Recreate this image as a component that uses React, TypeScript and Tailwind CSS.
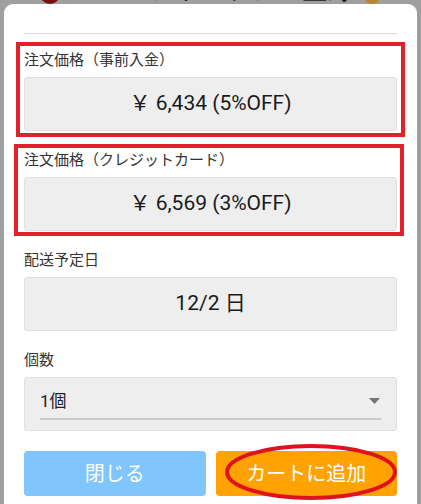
import React from "react";

const font = { fontFamily: "Roboto, 'Noto Sans CJK JP', sans-serif" };

function Field({ label, value, children }: { label: string; value?: string; children?: React.ReactNode }) {
  return (
    <div className="relative">
      <div className="text-[15px] leading-[20px] text-[#333]">{label}</div>
      <div className="mt-[7px] h-[54px] rounded-[3px] border border-[#dfdfdf] bg-[#eeeeee] flex items-center justify-center text-[21px] text-[#1a1a1a]">
        {value}
      </div>
      {children}
    </div>
  );
}

export default function App() {
  return (
    <div className="relative h-[504px] w-[421px] overflow-hidden bg-[#9f9f9f]" style={font}>
      <div className="h-[4px] overflow-hidden">
        <div className="-mt-[24px] flex h-[28px] items-end gap-[10px] pl-[40px] text-[26px] leading-[28px] text-[#1a1a1a] whitespace-nowrap">
          <span className="inline-block h-[24px] w-[20px] rounded-full bg-[#7a1010]" />
          <span>ノベルティボックス登録</span>
          <span className="inline-block h-[24px] w-[16px] rounded-full bg-[#b8862a]" />
        </div>
      </div>
      <div className="mx-[4px] rounded-t-[9px] bg-white px-[20px] pt-[29px] pb-[40px]">
        <div className="h-px bg-[#dcdcdc]" />
        <div className="mt-[16px] flex flex-col gap-[19px]">
          <Field label="注文価格（事前入金）" value="￥ 6,434 (5%OFF)">
            <div className="absolute -left-[8px] -right-[8px] -top-[8px] -bottom-[6px] border-[4px] border-[#e3202b]" />
          </Field>
          <Field label="注文価格（クレジットカード）" value="￥ 6,569 (3%OFF)">
            <div className="absolute -left-[10px] -right-[7px] -top-[6px] -bottom-[5px] border-[4px] border-[#e3202b]" />
          </Field>
          <Field label="配送予定日" value="12/2 日" />
          <div>
            <div className="text-[15px] leading-[20px] text-[#333]">個数</div>
            <div className="mt-[7px] h-[54px] rounded-[3px] border border-[#dfdfdf] bg-[#eeeeee] px-[15px] pt-[12px]">
              <div className="flex items-center justify-between border-b-2 border-[#c9c9c9] pb-[6px]">
                <span className="text-[17px] leading-[22px] text-[#222]">1個</span>
                <svg width="11" height="6" viewBox="0 0 11 6" className="mr-[1px]">
                  <path d="M0 0 L11 0 L5.5 6 Z" fill="#757575" />
                </svg>
              </div>
            </div>
          </div>
        </div>
        <div className="mt-[20px] grid grid-cols-2 gap-[10px]">
          <button className="h-[45px] rounded-[4px] bg-[#80c5fc] text-[20px] text-white">閉じる</button>
          <div className="relative">
            <button className="h-[45px] w-full rounded-[4px] bg-[#ffa202] text-[20px] text-white">カートに追加</button>
            <svg className="absolute left-[8px] -top-[8px]" width="176" height="58" viewBox="0 0 176 58">
              <ellipse cx="87" cy="29" rx="84" ry="26" fill="none" stroke="#e0121e" strokeWidth="4" />
            </svg>
          </div>
        </div>
      </div>
    </div>
  );
}
